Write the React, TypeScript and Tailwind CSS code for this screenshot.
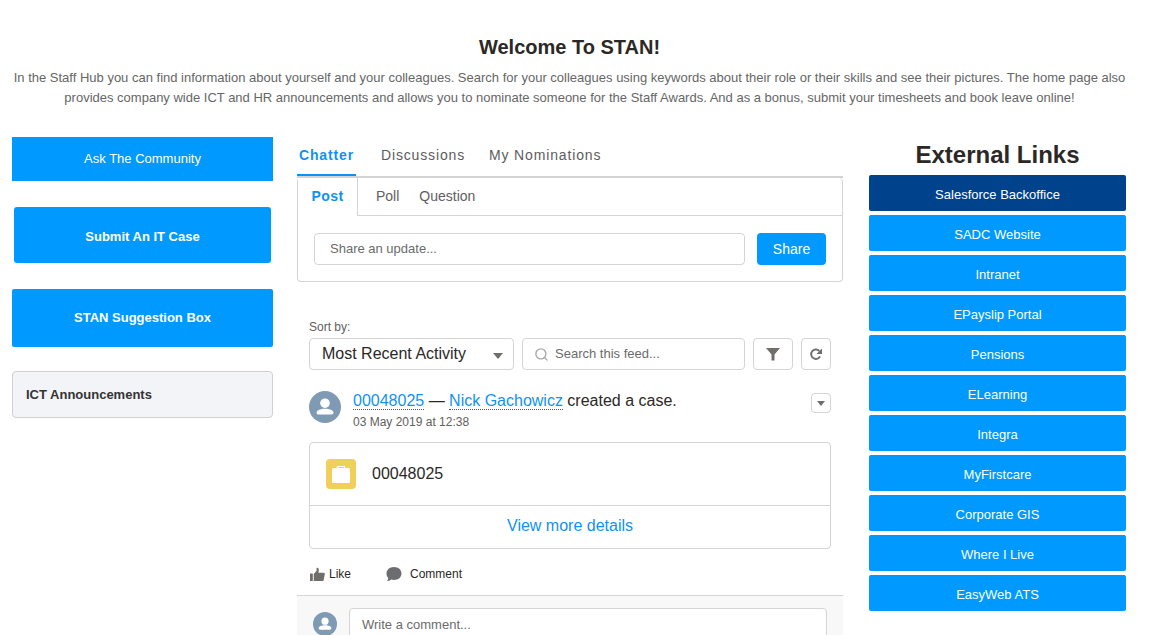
import { Search } from "lucide-react";

const links = ["Salesforce Backoffice","SADC Website","Intranet","EPayslip Portal","Pensions","ELearning","Integra","MyFirstcare","Corporate GIS","Where I Live","EasyWeb ATS"];

function Avatar({ size }: { size: number }) {
  return (
    <svg width={size} height={size} viewBox="0 0 32 32" className="shrink-0">
      <circle cx="16" cy="16" r="16" fill="#7f9ab3" />
      <circle cx="16" cy="12.2" r="4.8" fill="#fff" />
      <path d="M7.500 21.800c0-2.400 3.800-4 8.500-4s8.500 1.600 8.500 4c0 1-.7 1.700-1.700 1.700H9.200c-1 0-1.700-.7-1.700-1.700z" fill="#fff" />
    </svg>
  );
}

function Caret({ className }: { className: string }) {
  return (
    <svg viewBox="0 0 10 6" className={className}><path d="M0 0h10L5 6z" fill="#706e6b" /></svg>
  );
}

export default function App() {
  return (
    <div className="h-[635px] w-[1150px] overflow-hidden bg-white font-['Liberation_Sans',Arial,sans-serif] text-[#3e3e3c]">
      <header className="pr-[11px] pt-[35px] text-center">
        <h1 className="text-[20px] leading-[24px] font-bold text-[#2b2826]">Welcome To STAN!</h1>
        <p className="mt-[9px] text-[13px] leading-[20px] text-[#666]">
          In the Staff Hub you can find information about yourself and your colleagues. Search for your colleagues using keywords about their role or their skills and see their pictures. The home page also<br />
          provides company wide ICT and HR announcements and allows you to nominate someone for the Staff Awards. And as a bonus, submit your timesheets and book leave online!
        </p>
      </header>

      <div className="mt-[29px] flex items-start pl-[12px]">
        <aside className="flex w-[261px] shrink-0 flex-col items-center text-white">
          <a className="flex h-[44px] w-full items-center justify-center bg-[#0099ff] text-[13px]">Ask The Community</a>
          <a className="mt-[26px] flex h-[56px] w-[257px] items-center justify-center rounded-[3px] bg-[#0099ff] pt-[4px] text-[13px] font-bold">Submit An IT Case</a>
          <a className="mt-[26px] flex h-[58px] w-full items-center justify-center rounded-[2px] bg-[#0099ff] text-[13px] font-bold">STAN Suggestion Box</a>
          <div className="mt-[24px] flex h-[47px] w-full items-center rounded-[4px] border border-[#d0d0d0] bg-[#f3f4f8] pl-[13px] text-[13px] font-bold text-[#333]">ICT Announcements</div>
        </aside>

        <main className="ml-[24px] w-[546px] shrink-0">
          <nav className="flex h-[41px] items-end border-b-2 border-[#d4d4d4] text-[14px] tracking-[0.85px] text-[#5c5c5c]">
            <div className="flex h-[39px] items-center border-b-2 border-[#0a93f5] px-[2px] pb-[1px] font-bold text-[#1092f5]">Chatter</div>
            <div className="flex h-[39px] items-center pb-[3px] pl-[25px]">Discussions</div>
            <div className="flex h-[39px] items-center pb-[3px] pl-[24px]">My Nominations</div>
          </nav>

          <section className="h-[104px] rounded-[4px] border border-t-0 border-[#d4d4d4]">
            <div className="flex h-[38px] items-stretch border-b border-[#d4d4d4] text-[14px] text-[#62605e]">
              <div className="-mb-px flex w-[60px] items-center justify-center border-r border-[#d4d4d4] bg-white pb-[2px] font-bold tracking-[0.4px] text-[#1092f5]">Post</div>
              <div className="flex items-center pl-[18px]">Poll</div>
              <div className="flex items-center pl-[20px]">Question</div>
            </div>
            <div className="flex items-center gap-[12px] px-[16px] pt-[17px]">
              <div className="flex h-[32px] flex-1 items-center rounded-[4px] border border-[#d4d4d4] pl-[15px] text-[13px] text-[#6b6b6b]">Share an update...</div>
              <button className="h-[32px] w-[69px] rounded-[4px] bg-[#0099ff] text-[14px] text-white">Share</button>
            </div>
          </section>

          <section className="px-[12px] pt-[38px]">
            <div className="text-[12px] leading-[14px] text-[#62605e]">Sort by:</div>
            <div className="mt-[4px] flex gap-[8px]">
              <div className="flex h-[32px] w-[205px] items-center justify-between rounded-[4px] border border-[#d4d4d4] pl-[12px] pr-[10px] text-[16px] text-[#2b2826]">
                Most Recent Activity
                <Caret className="mt-[3px] h-[6px] w-[10px]" />
              </div>
              <div className="flex h-[32px] w-[223px] items-center rounded-[4px] border border-[#d4d4d4] pl-[11px] text-[13px] text-[#6b6b6b]">
                <Search size={15} color="#a8a8a8" strokeWidth={2.2} className="mr-[6px]" />
                Search this feed...
              </div>
              <div className="flex h-[32px] w-[40px] items-center justify-center rounded-[4px] border border-[#d4d4d4]">
                <svg viewBox="0 0 14 14" className="h-[14px] w-[14px]"><path d="M0 1h14L8.500 7.500V13.500H5.500V7.500z" fill="#706e6b" /></svg>
              </div>
              <div className="flex h-[32px] w-[30px] items-center justify-center rounded-[4px] border border-[#d4d4d4]">
                <svg viewBox="0 0 14 14" className="h-[14px] w-[14px]"><path d="M11 9.500A4.700 4.700 0 1 1 10.300 4" fill="none" stroke="#706e6b" strokeWidth="1.900" /><path d="M13 1.500V7H7.500z" fill="#706e6b" /></svg>
              </div>
            </div>

            <div className="mt-[21px] flex items-start">
              <Avatar size={32} />
              <div className="ml-[12px] flex-1">
                <div className="text-[16px] leading-[20px] text-[#2b2826]">
                  <span className="border-b border-dotted border-[#555] text-[#1092f5]">00048025</span> — <span className="border-b border-dotted border-[#555] text-[#1092f5]">Nick Gachowicz</span> created a case.
                </div>
                <div className="mt-[4px] text-[12px] leading-[14px] text-[#62605e]">03 May 2019 at 12:38</div>
              </div>
              <div className="mt-[2px] flex h-[20px] w-[20px] items-center justify-center rounded-[4px] border border-[#d4d4d4]">
                <Caret className="h-[5px] w-[8px]" />
              </div>
            </div>

            <div className="mt-[13px] h-[107px] rounded-[4px] border border-[#d4d4d4]">
              <div className="flex h-[63px] items-center border-b border-[#d4d4d4] pl-[16px] text-[16px] text-[#2b2826]">
                <div className="flex h-[30px] w-[30px] items-center justify-center rounded-[4px] bg-[#f2cf5b]">
                  <svg viewBox="0 0 18 20" className="h-[20px] w-[18px]"><path d="M5.500 5V2.500h7V5" fill="none" stroke="#fff" strokeWidth="1.200" /><rect x="0" y="4" width="18" height="15" rx="1.500" fill="#fff" /></svg>
                </div>
                <span className="ml-[16px]">00048025</span>
              </div>
              <div className="flex h-[42px] items-center justify-center pb-[2px] text-[16px] text-[#1092f5]">View more details</div>
            </div>

            <div className="mt-[17px] flex h-[16px] items-center text-[12px] text-[#2b2826]">
              <svg viewBox="0 0 16 16" className="ml-[1px] h-[15px] w-[15px]"><path d="M0 7h3v8H0zM4 7.500 7 4V1c1.500-.5 2.500.7 2.400 2L9 6h5.500c1 0 1.500.8 1.300 1.600l-1.300 6.400c-.2.700-.7 1-1.300 1H4z" fill="#706e6b" /></svg>
              <span className="ml-[4px]">Like</span>
              <svg viewBox="0 0 16 16" className="ml-[35px] h-[16px] w-[16px]"><path d="M8 1c4.300 0 7.500 2.800 7.500 6.500S12.300 14 8 14c-1 0-1.900-.2-2.700-.4C4.300 14.700 2.600 15.200 1 15c.7-.8 1.200-1.800 1.300-3C1 10.900.5 9.300.5 7.500.5 3.800 3.700 1 8 1z" fill="#6b6d70" /></svg>
              <span className="ml-[8px]">Comment</span>
            </div>
          </section>

          <section className="mt-[13px] flex h-[60px] items-start border-t border-[#d4d4d4] bg-[#f8f8f8] pl-[16px] pr-[16px] pt-[12px]">
            <div className="mt-[4px]"><Avatar size={24} /></div>
            <div className="ml-[12px] flex h-[32px] flex-1 items-center rounded-[4px] border border-[#d4d4d4] bg-white pl-[12px] pt-[2px] text-[13px] text-[#6b6b6b]">Write a comment...</div>
          </section>
        </main>

        <aside className="ml-[26px] w-[257px] shrink-0">
          <h2 className="h-[38px] text-center text-[24px] leading-[36px] font-bold text-[#2b2826]">External Links</h2>
          <div className="flex flex-col gap-[4px]">
            {links.map((l, i) => (
              <a key={l} className={`flex h-[36px] items-center justify-center rounded-[2px] pt-[4px] text-[13px] text-white ${i === 0 ? "bg-[#00428c]" : "bg-[#0099ff]"}`}>{l}</a>
            ))}
          </div>
        </aside>
      </div>
    </div>
  );
}
